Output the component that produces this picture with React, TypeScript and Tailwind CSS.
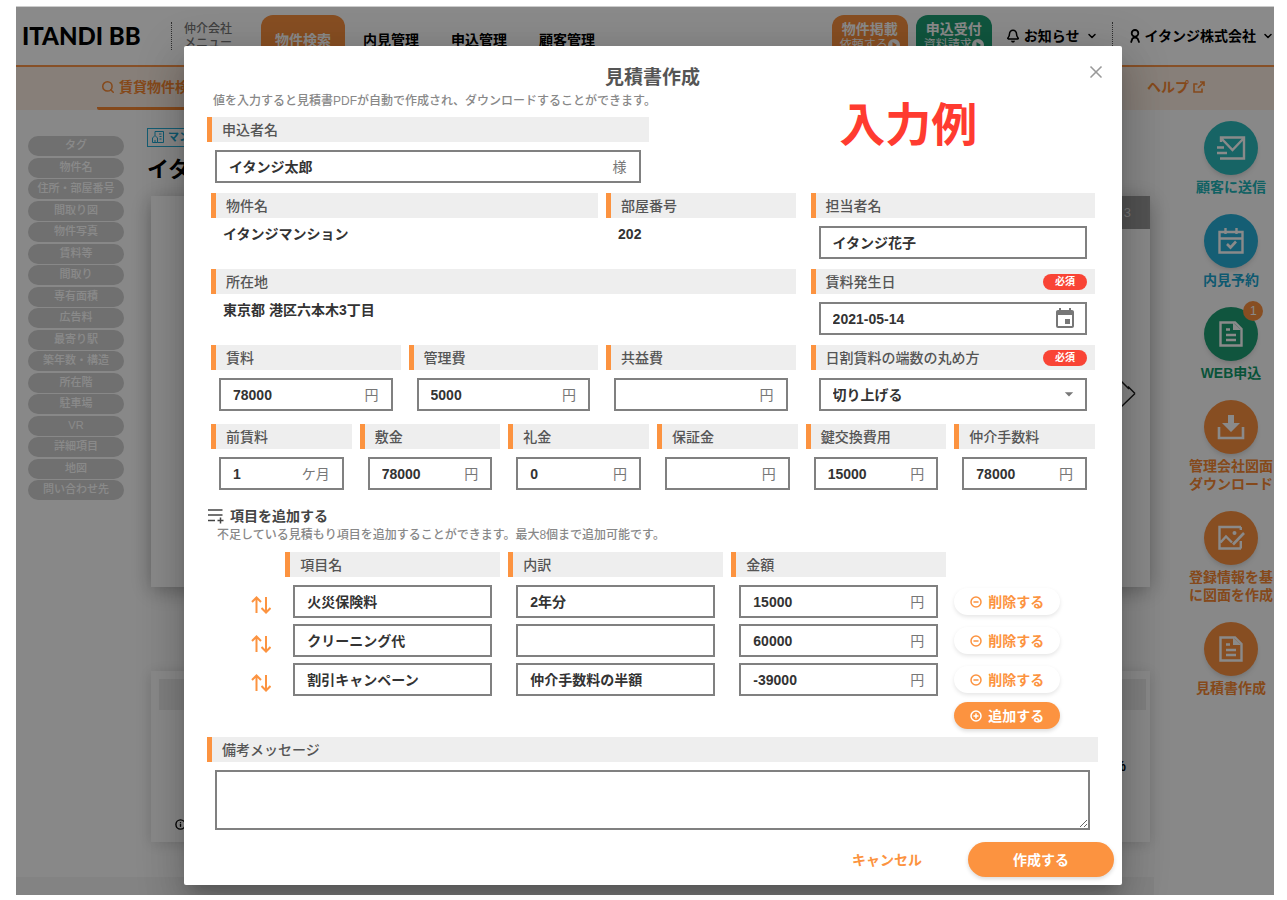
import React, { useState } from 'react';
import { Bell, ChevronDown, CircleMinus, CirclePlus, Info, Search, X } from 'lucide-react';
import { MdArrowDropDown, MdEvent } from 'react-icons/md';

// --- ICONS ---

const IconUser = () => (
  <svg viewBox="0 0 12 14" fill="none" stroke="currentColor" strokeWidth="1.8" strokeLinecap="round" className="w-3 h-3.5">
    <circle cx="6" cy="4.3" r="3.3" /><path d="M2.2 13 3.4 9.6Q6 7.4 8.6 9.6L10 13" />
  </svg>
);

const IconExternal = () => (
  <svg viewBox="0 0 12 12" fill="none" stroke="currentColor" strokeWidth="1.6" className="w-3 h-3">
    <path d="M4.5 3H1v8h8V7.5M7 1h4v4M11 1 5 7" />
  </svg>
);

const IconBuilding = () => (
  <svg viewBox="0 0 12 12" fill="none" stroke="currentColor" strokeWidth="1" className="w-3 h-3">
    <path d="M.5 11.5V7L3 4.5 5.5 7v4.5zM3 4.5v-4h8.5v11h-6M3 11.5V9M7 3h2.5M7.5 5.5h2M7.5 8h2" />
  </svg>
);

const IconMail = () => (
  <svg viewBox="0 0 30 26" fill="none" stroke="currentColor" strokeWidth="2.4" className="w-[30px] h-[26px]">
    <path d="M5 7V2.500h23v21H4M5 3l11.500 12L28 3M1 12.500h7M1 18h10" />
  </svg>
);

const IconCalendarCheck = () => (
  <svg viewBox="0 0 28 28" fill="none" stroke="currentColor" strokeWidth="2.4" className="w-7 h-7">
    <path d="M2.5 5h23v20.5h-23zM2.5 11.5h23M8.5 1v6M19.500 1v6" /><path d="m10 17 3.5 3.500L19 14.500" strokeWidth="2.6" />
  </svg>
);

const IconDocument = () => (
  <svg viewBox="0 0 26 28" fill="none" stroke="currentColor" strokeWidth="2.4" className="w-[26px] h-7">
    <path d="M2.500 2.500h14.500L23.500 9v16.500h-21z" />
    <path d="M15 2.500V10h8z" fill="currentColor" stroke="none" />
    <path d="M8 9.500h4M8 15h10M8 20h10" />
  </svg>
);

const IconDownload = () => (
  <svg viewBox="0 0 28 26" className="w-7 h-[26px]">
    <path d="M11 1h6v8h6l-9 9-9-9h6z" fill="currentColor" />
    <path d="M2 13v11h24V13" fill="none" stroke="currentColor" strokeWidth="2.6" />
  </svg>
);

const IconImageEdit = () => (
  <svg viewBox="0 0 28 26" fill="none" stroke="currentColor" strokeWidth="2.4" className="w-7 h-[26px]">
    <path d="M24 2H2.500v21.500H24M23.800 2v3M23.800 16v7.500M3.500 17.500l5.500-6 6 6" />
    <path d="M27 8 16 19.500" strokeWidth="2.6" />
    <circle cx="17.500" cy="8" r="2" fill="currentColor" stroke="none" />
  </svg>
);

const IconPlaylistAdd = () => (
  <svg viewBox="0 0 18 16" fill="none" stroke="currentColor" strokeWidth="1.5" className="w-[18px] h-4">
    <path d="M1 2h14.500M1 7h14.500M1 12.500h7M13.500 9.500v6M10.500 12.500h6" />
  </svg>
);

const IconSort = () => (
  <svg viewBox="0 0 20 18" fill="none" stroke="currentColor" strokeWidth="2" className="w-5 h-[18px]">
    <path d="M5.500 17V2M1 6l4.500-4.500L10 6M15 1v15M10.500 12l4.500 4.500L19.500 12" />
  </svg>
);

const IconPlay = () => (
  <svg viewBox="0 0 12 12" className="w-3 h-3">
    <path fillRule="evenodd" fill="currentColor" d="M6 0a6 6 0 1 1 0 12A6 6 0 0 1 6 0zM4.500 3v6L9 6z" />
  </svg>
);

// --- DATA ---

const anchors = [
  'タグ', '物件名', '住所・部屋番号', '間取り図', '物件写真', '賃料等', '間取り', '専有面積', '広告料',
  '最寄り駅', '築年数・構造', '所在階', '駐車場', 'VR', '詳細項目', '地図', '問い合わせ先',
];

const actions = [
  { label: ['顧客に送信'], circle: 'bg-[#2cb9bb]', text: 'text-[#20b4b8]', icon: <IconMail /> },
  { label: ['内見予約'], circle: 'bg-[#28aed6]', text: 'text-[#1aa5cf]', icon: <IconCalendarCheck /> },
  { label: ['WEB申込'], circle: 'bg-[#1f9d74]', text: 'text-[#109a6a]', icon: <IconDocument />, badge: 1 },
  { label: ['管理会社図面', 'ダウンロード'], circle: 'bg-[#fa9040]', text: 'text-[#f58833]', icon: <IconDownload /> },
  { label: ['登録情報を基', 'に図面を作成'], circle: 'bg-[#fa9040]', text: 'text-[#f58833]', icon: <IconImageEdit /> },
  { label: ['見積書作成'], circle: 'bg-[#fa9040]', text: 'text-[#f58833]', icon: <IconDocument /> },
];

const rentFields = [
  { id: 'rent', label: '賃料', value: '78000', unit: '円' },
  { id: 'admin', label: '管理費', value: '5000', unit: '円' },
  { id: 'common', label: '共益費', value: '', unit: '円' },
];

const initialFields = [
  { id: 'advance', label: '前賃料', value: '1', unit: 'ケ月' },
  { id: 'deposit', label: '敷金', value: '78000', unit: '円' },
  { id: 'key-money', label: '礼金', value: '0', unit: '円' },
  { id: 'guarantee', label: '保証金', value: '', unit: '円' },
  { id: 'key-change', label: '鍵交換費用', value: '15000', unit: '円' },
  { id: 'commission', label: '仲介手数料', value: '78000', unit: '円' },
];

const defaultItems = [
  { id: 1, name: '火災保険料', detail: '2年分', price: '15000' },
  { id: 2, name: 'クリーニング代', detail: '', price: '60000' },
  { id: 3, name: '割引キャンペーン', detail: '仲介手数料の半額', price: '-39000' },
];

// --- FORM PARTS ---

const Heading = ({ htmlFor, required, children }: { htmlFor?: string; required?: boolean; children: React.ReactNode }) => {
  const Tag = htmlFor ? 'label' : 'div';
  return (
    <Tag htmlFor={htmlFor} className="flex items-center justify-between h-[25px] pl-2.5 pr-2 border-l-[5px] border-[#fc9340] bg-[#eee] text-sm font-medium text-[#555]">
      {children}
      {required && <span className="w-11 h-4 rounded-full bg-[#f94435] text-white text-[10px] leading-4 font-bold text-center">必須</span>}
    </Tag>
  );
};

const TextBox = ({ id, label, value, unit }: { id?: string; label?: string; value: string; unit?: React.ReactNode }) => (
  <div className="flex items-center h-[33px] px-3 border-2 border-[#808080] bg-white">
    <input id={id} aria-label={label} type="text" defaultValue={value} className="flex-1 min-w-0 bg-transparent text-sm font-bold text-[#333] outline-none" />
    {unit && <span className="shrink-0 text-sm text-[#777]">{unit}</span>}
  </div>
);

const Field = ({ id, label, value, unit, required }: { id: string; label: string; value: string; unit?: React.ReactNode; required?: boolean }) => (
  <div>
    <Heading htmlFor={id} required={required}>{label}</Heading>
    <div className="mt-2 px-2"><TextBox id={id} value={value} unit={unit} /></div>
  </div>
);

const Fact = ({ label, value }: { label: string; value: string }) => (
  <div className="h-[66px]">
    <Heading>{label}</Heading>
    <p className="mt-1 pl-3 text-sm leading-6 font-bold text-[#333]">{value}</p>
  </div>
);

// --- PAGE BEHIND THE DIALOG ---

const Header = () => (
  <header className="flex items-center h-[60px] pl-1.5 border-b-2 border-[#fa9549] bg-white text-sm font-bold text-black">
    <div className="w-[149px] whitespace-nowrap font-[Lato] text-2xl font-black">ITANDI BB</div>
    <div className="h-7 border-l border-dotted border-[#555]" />
    <div className="ml-3 w-[77px] text-xs leading-[14px] font-medium text-[#777]">仲介会社<br />メニュー</div>
    <nav className="flex items-center mt-2 h-[50px] gap-8">
      <a href="#search" className="flex items-center justify-center w-[84px] h-full -mr-3.5 rounded-t-xl bg-[#fa9040] text-white">物件検索</a>
      <a href="#preview">内見管理</a>
      <a href="#apply">申込管理</a>
      <a href="#customers">顧客管理</a>
    </nav>
    <div className="flex items-center ml-auto mt-2 h-[50px] gap-2 text-white leading-4">
      <a href="#list" className="w-19 h-full pt-1.5 rounded-xl bg-[#fa9040] text-center">物件掲載<span className="flex items-center justify-center text-xs font-normal">依頼する<IconPlay /></span></a>
      <a href="#accept" className="w-19 h-full pt-1.5 rounded-xl bg-[#1f9d74] text-center">申込受付<span className="flex items-center justify-center text-xs font-normal">資料請求<IconPlay /></span></a>
    </div>
    <button type="button" className="flex items-center ml-3.5 gap-1">
      <Bell className="w-3.5 h-3.5" strokeWidth={2.6} />お知らせ<ChevronDown className="ml-0.5 w-3 h-3" strokeWidth={3} />
    </button>
    <div className="ml-3.5 mr-4 h-7 border-l border-dotted border-[#555]" />
    <button type="button" className="flex items-center gap-1">
      <IconUser />イタンジ株式会社<ChevronDown className="ml-0.5 w-3 h-3" strokeWidth={3} />
    </button>
  </header>
);

const Backdrop = () => (
  <div className="absolute inset-0 flex flex-col overflow-hidden bg-[#fcfcfc]" aria-hidden="true">
    <Header />
    <div className="flex justify-between h-[43px] shrink-0 pl-[81px] pr-[69px] bg-[#faebe0] text-sm font-bold text-[#f58833]">
      <a href="#rent" className="flex items-center gap-1 px-1 border-b-3 border-[#f58833] rounded-bl-xs"><Search className="w-3.5 h-3.5" strokeWidth={2.6} />賃貸物件検索</a>
      <a href="#help" className="flex items-center gap-1 pb-1">ヘルプ<IconExternal /></a>
    </div>
    <div className="flex flex-1">
      <div className="flex flex-col flex-1">
        <div className="flex flex-1 pl-3">
          <ul className="flex flex-col justify-between w-24 h-[364px] mt-[26px] text-[11px] leading-[18px] font-medium text-center text-white">
            {anchors.map((name) => <li key={name} className="h-5 rounded-full bg-[#cfcfcf]">{name}</li>)}
          </ul>
          <main className="flex-1 ml-[23px] pt-4 pr-1">
            <span className="inline-flex items-center gap-1 h-[19px] px-1 border border-[#28aed6] text-[11px] font-bold text-[#1aa5cf]"><IconBuilding />マンション</span>
            <h1 className="text-[22px] leading-10 font-bold text-black">イタンジマンション</h1>
            <section className="flex flex-col items-end h-[391px] mt-1.5 ml-1 bg-white shadow-[0_4px_20px_rgba(0,0,0,0.3)]">
              <div className="w-1/2 h-[33px] pr-[19px] bg-[#999] text-right text-[13px] leading-[33px] text-white/70">3</div>
              <svg viewBox="0 0 20 28" fill="none" stroke="#222" strokeWidth="1.5" className="w-5 h-7 mt-[152px] mr-3.5">
                <path d="M5 0 13 8M19 12.500 5 26M12 5.500l7 7" />
              </svg>
            </section>
            <section className="h-[171px] mt-[84px] ml-1 p-2 bg-white shadow-[0_2px_14px_rgba(0,0,0,0.15)]">
              <div className="h-[31px] -mr-1 bg-[#ececec]" />
              <div className="mt-11 pr-4 text-right text-sm font-bold leading-6 text-black">100%</div>
              <div className="flex items-center h-5 mt-9 pl-4 text-black"><Info className="w-[11px] h-[11px]" strokeWidth={3} /></div>
            </section>
          </main>
        </div>
        <footer className="h-[18px] bg-[#f2f2f2]" />
      </div>
      <aside className="w-[120px] pt-[11px] pl-[34px]">
        <ul className="flex flex-col items-center gap-[18px] whitespace-nowrap">
          {actions.map((a) => (
            <li key={a.label[0]} className="relative flex flex-col items-center gap-[3px]">
              <button type="button" aria-label={a.label.join('')} className={`flex items-center justify-center w-[54px] h-[54px] rounded-full text-white shadow-md ${a.circle}`}>{a.icon}</button>
              {a.badge && <span className="absolute -top-1.5 -right-0.5 w-5 h-5 rounded-full bg-[#fa9040] text-xs leading-5 text-center text-white">{a.badge}</span>}
              <span className={`text-sm leading-[18px] font-bold text-center ${a.text}`}>{a.label[0]}{a.label[1] && <><br />{a.label[1]}</>}</span>
            </li>
          ))}
        </ul>
      </aside>
    </div>
    <div className="absolute inset-0 bg-black/46" />
  </div>
);

// --- MAIN COMPONENT ---

export default function App() {
  const [items, setItems] = useState(defaultItems);
  const [rounding, setRounding] = useState('up');

  const removeItem = (id: number) => setItems(items.filter((item) => item.id !== id));
  const addItem = () => {
    if (items.length < 8) setItems([...items, { id: Date.now(), name: '', detail: '', price: '' }]);
  };

  return (
    <div className="min-h-screen pt-1.5 pb-[5px] pl-4 pr-[13px] bg-white font-['Liberation_Sans','Noto_Sans_CJK_JP',sans-serif]">
      <div className="relative overflow-hidden border-t border-[#ccc]">
        <Backdrop />

        <form
          role="dialog"
          aria-labelledby="dialog-title"
          onSubmit={(e) => e.preventDefault()}
          className="relative mt-[39px] mb-2.5 ml-[168px] mr-[152px] pt-[18px] pb-2 pl-[23px] pr-6 rounded-xs bg-white shadow-[0_11px_15px_-7px_rgba(0,0,0,0.2),0_24px_38px_3px_rgba(0,0,0,0.14),0_9px_46px_8px_rgba(0,0,0,0.12)]"
        >
          <h2 id="dialog-title" className="text-center text-[19px] leading-7 font-bold text-[#555]">見積書作成</h2>
          <button type="button" aria-label="閉じる" className="absolute top-4 right-4 text-[#999]"><X className="w-5 h-5" strokeWidth={2} /></button>
          <p className="pl-1.5 text-xs leading-[18px] font-medium text-[#888]">値を入力すると見積書PDFが自動で作成され、ダウンロードすることができます。</p>

          <div className="flex mt-[7px]">
            <div className="w-1/2 pr-1"><Field id="applicant" label="申込者名" value="イタンジ太郎" unit="様" /></div>
            <strong className="flex-1 -mt-5 pl-[90px] pr-6 text-center text-[46px] leading-[56px] font-bold text-[#ff3b30]">入力例</strong>
          </div>

          <div className="mt-2.5 pl-1 pr-[3px]">
            <div className="grid grid-cols-[37fr_18fr] gap-[15px]">
              <div className="flex flex-col gap-2.5">
                <div className="grid grid-cols-3 gap-2">
                  <div className="col-span-2"><Fact label="物件名" value="イタンジマンション" /></div>
                  <Fact label="部屋番号" value="202" />
                </div>
                <Fact label="所在地" value="東京都 港区六本木3丁目" />
                <div className="grid grid-cols-3 gap-2">
                  {rentFields.map((f) => <Field key={f.id} {...f} />)}
                </div>
              </div>
              <div className="flex flex-col gap-2.5">
                <Field id="person" label="担当者名" value="イタンジ花子" />
                <Field id="start-date" label="賃料発生日" value="2021-05-14" required unit={<MdEvent className="w-6 h-6 -mr-1" />} />
                <div>
                  <Heading htmlFor="rounding" required>日割賃料の端数の丸め方</Heading>
                  <div className="relative mt-2 px-2">
                    <select id="rounding" value={rounding} onChange={(e) => setRounding(e.target.value)} className="appearance-none w-full h-[33px] px-3 border-2 border-[#808080] bg-white text-sm font-bold text-[#333]">
                      <option value="up">切り上げる</option>
                      <option value="down">切り捨てる</option>
                      <option value="round">四捨五入する</option>
                    </select>
                    <MdArrowDropDown className="absolute right-4 top-1.5 w-5 h-5 text-[#777] pointer-events-none" />
                  </div>
                </div>
              </div>
            </div>
            <div className="grid grid-cols-6 gap-2 mt-[13px]">
              {initialFields.map((f) => <Field key={f.id} {...f} />)}
            </div>
          </div>

          <h3 className="flex items-center gap-[5px] mt-4 text-sm leading-5 font-bold text-[#444]"><IconPlaylistAdd />項目を追加する</h3>
          <p className="pl-2.5 text-xs leading-[18px] font-medium text-[#888]">不足している見積もり項目を追加することができます。最大8個まで追加可能です。</p>

          <div className="mt-2 pl-1 pr-[3px]">
            <div className="grid grid-cols-12 gap-2">
              <div className="col-start-2 col-span-3"><Heading>項目名</Heading></div>
              <div className="col-span-3"><Heading>内訳</Heading></div>
              <div className="col-span-3"><Heading>金額</Heading></div>
            </div>
            <div className="flex flex-col gap-1.5 mt-2">
              {items.map((item) => (
                <div key={item.id} className="grid grid-cols-12 gap-2 items-center">
                  <button type="button" aria-label="並べ替え" className="justify-self-end mr-1.5 pt-1.5 text-[#fc9340]"><IconSort /></button>
                  <div className="col-span-3 px-2"><TextBox label="項目名" value={item.name} /></div>
                  <div className="col-span-3 px-2"><TextBox label="内訳" value={item.detail} /></div>
                  <div className="col-span-3 px-2"><TextBox label="金額" value={item.price} unit="円" /></div>
                  <button type="button" onClick={() => removeItem(item.id)} className="col-span-2 flex items-center justify-center gap-1.5 w-[106px] h-[27px] rounded-full bg-white text-sm font-bold text-[#fc9340] shadow-[0_2px_4px_rgba(0,0,0,0.1)]">
                    <CircleMinus className="w-3 h-3" strokeWidth={3} />削除する
                  </button>
                </div>
              ))}
              <div className="grid grid-cols-12 gap-2">
                <button type="button" onClick={addItem} className="col-start-11 col-span-2 flex items-center justify-center gap-1.5 w-[106px] h-[27px] rounded-full bg-[#fc9340] text-sm font-bold text-white shadow-[0_2px_4px_rgba(0,0,0,0.15)]">
                  <CirclePlus className="w-3 h-3" strokeWidth={3} />追加する
                </button>
              </div>
            </div>
          </div>

          <div className="mt-2">
            <Heading htmlFor="memo">備考メッセージ</Heading>
            <div className="px-2 mt-2">
              <textarea id="memo" className="block w-full h-15 p-2 border-2 border-[#808080] bg-white text-sm text-[#333] resize outline-none" />
            </div>
          </div>

          <div className="flex justify-end items-center gap-[46px] mt-3 -mr-4">
            <button type="button" className="text-sm font-bold text-[#fc9340]">キャンセル</button>
            <button type="submit" className="w-[146px] h-[35px] rounded-full bg-[#fc9340] text-sm font-bold text-white shadow-[0_2px_4px_rgba(0,0,0,0.15)]">作成する</button>
          </div>
        </form>
      </div>
    </div>
  );
}
